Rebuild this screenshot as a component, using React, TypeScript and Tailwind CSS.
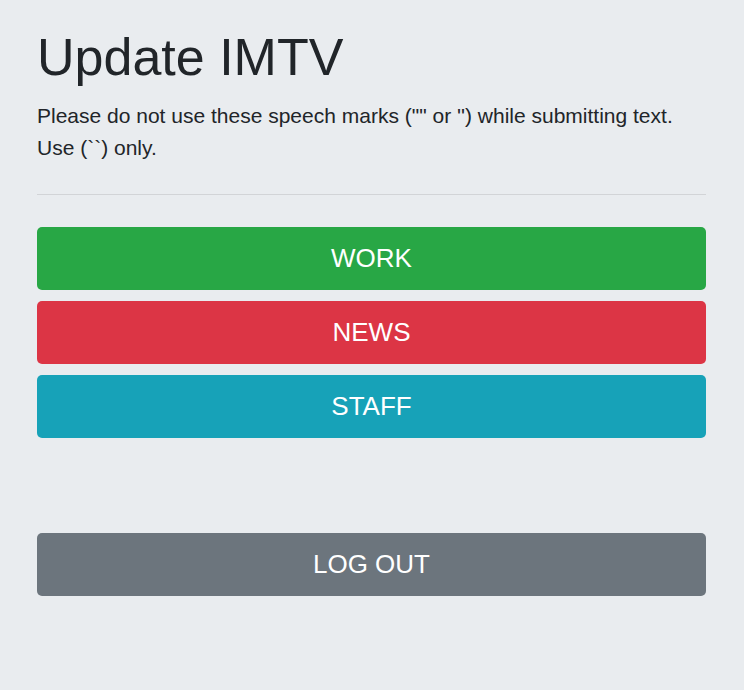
export default function App() {
  const buttons = [
    { label: "WORK", cls: "bg-[#28a745]" },
    { label: "NEWS", cls: "bg-[#dc3545]" },
    { label: "STAFF", cls: "bg-[#17a2b8]" },
  ];

  return (
    <div className="min-h-[690px] bg-[#e9ecef] pl-[37px] pr-[38px] pt-[26px] font-['Liberation_Sans',Arial,sans-serif] text-[#212529]">
      <h1 className="text-[52px] leading-[62px]">Update IMTV</h1>
      <p className="mt-[12px] text-[21px] leading-[31.5px]">
        Please do not use these speech marks ("" or '') while submitting text.
        <br />
        Use (``) only.
      </p>
      <hr className="mt-[31px] border-t border-[#d2d4d7]" />
      <div className="mt-[32px] flex flex-col gap-[11px]">
        {buttons.map((b) => (
          <button
            key={b.label}
            className={`${b.cls} h-[63px] w-full rounded-[5px] text-[26px] text-white`}
          >
            {b.label}
          </button>
        ))}
      </div>
      <button className="mt-[95px] h-[63px] w-full rounded-[5px] bg-[#6c757d] text-[26px] text-white">
        LOG OUT
      </button>
    </div>
  );
}
